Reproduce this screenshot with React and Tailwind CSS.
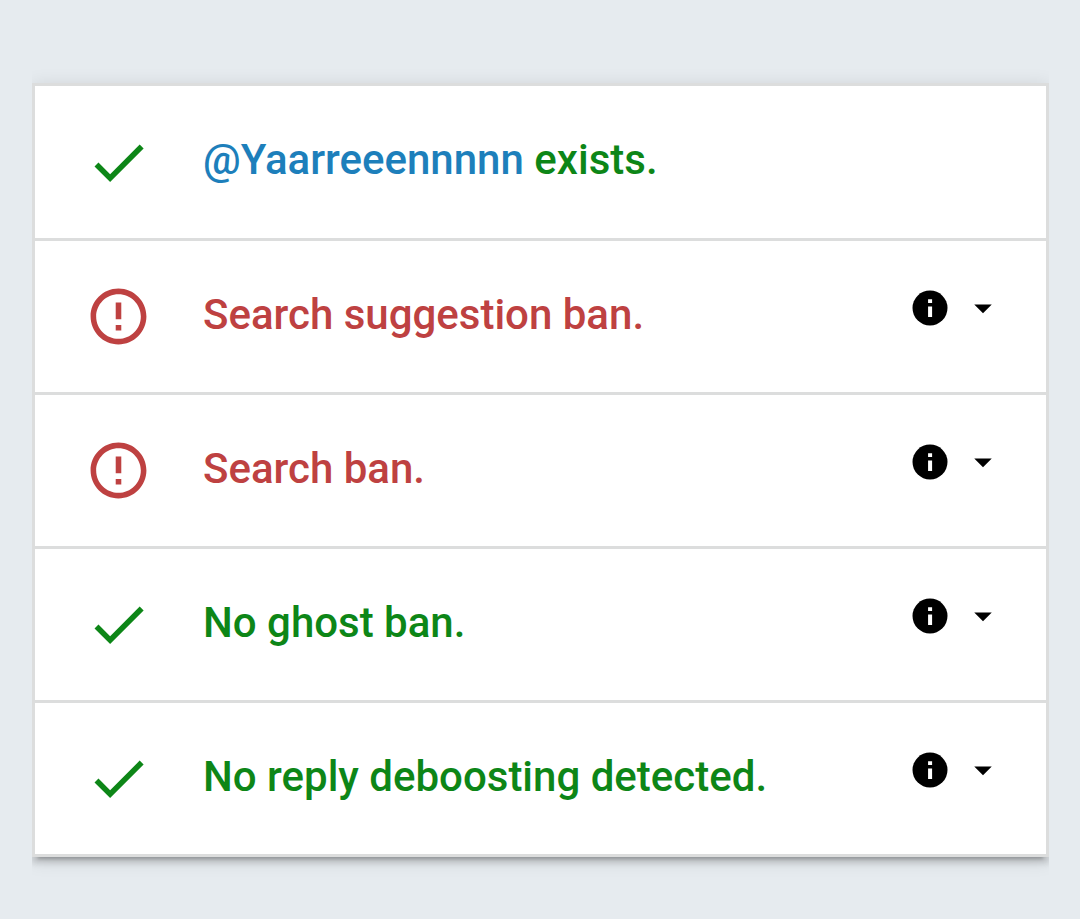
import React from "react";
import { MdArrowDropDown, MdCheck, MdErrorOutline } from "react-icons/md";

const checks = [
  { id: "suggestion", ok: false, label: "Search suggestion ban." },
  { id: "search", ok: false, label: "Search ban." },
  { id: "ghost", ok: true, label: "No ghost ban." },
  { id: "reply", ok: true, label: "No reply deboosting detected." },
];

function StatusIcon({ ok }) {
  return ok ? (
    <MdCheck className="size-[67px] shrink-0" aria-hidden="true" />
  ) : (
    <MdErrorOutline className="size-[67px] shrink-0" aria-hidden="true" />
  );
}

function InfoIcon() {
  return (
    <svg viewBox="0 0 24 24" className="size-[42px]" aria-hidden="true">
      <circle cx="12" cy="12" r="10" fill="currentColor" />
      <path d="M10.9 7h2.3v2.1h-2.3zM10.9 11.1h2.3v6h-2.3z" fill="#fff" />
    </svg>
  );
}

function ResultRow({ ok, label }) {
  return (
    <li
      className={`flex min-h-[154px] items-center gap-[51px] border-b-3 border-[#dcdddd] pr-[42px] pl-[50px] ${
        ok ? "text-[#0d8617]" : "text-[#be4141]"
      }`}
    >
      <StatusIcon ok={ok} />
      <p className="grow pb-1">{label}</p>
      <button
        type="button"
        aria-label={`Details: ${label}`}
        className="flex cursor-pointer items-center gap-[11px] pb-[18px] text-black"
      >
        <InfoIcon />
        <MdArrowDropDown className="size-[42px]" aria-hidden="true" />
      </button>
    </li>
  );
}

export default function App() {
  return (
    <main className="min-h-screen bg-[#e6ebef] pt-[83px] pr-[31px] pb-16 pl-8 font-['Roboto',sans-serif] text-[42px] leading-[56px] font-medium">
      {/* Sides are clipped so the shadow only shows above and below the list */}
      <div className="overflow-x-clip">
        <ul className="border-x-3 border-t-3 border-[#dcdddd] bg-white shadow-[0_8px_3px_-6px_rgba(0,0,0,0.2),0_6px_6px_0_rgba(0,0,0,0.14),0_3px_18px_0_rgba(0,0,0,0.12)]">
          <li className="flex min-h-[155px] items-center gap-[51px] border-b-3 border-[#dcdddd] pr-[42px] pl-[50px] text-[#0d8617]">
            <StatusIcon ok />
            <p className="grow pb-1">
              <a href="#profile" className="text-[#1d7fbb]">
                @Yaarreeennnnn
              </a>{" "}
              exists.
            </p>
          </li>
          {checks.map((check) => (
            <ResultRow key={check.id} ok={check.ok} label={check.label} />
          ))}
        </ul>
      </div>
    </main>
  );
}
